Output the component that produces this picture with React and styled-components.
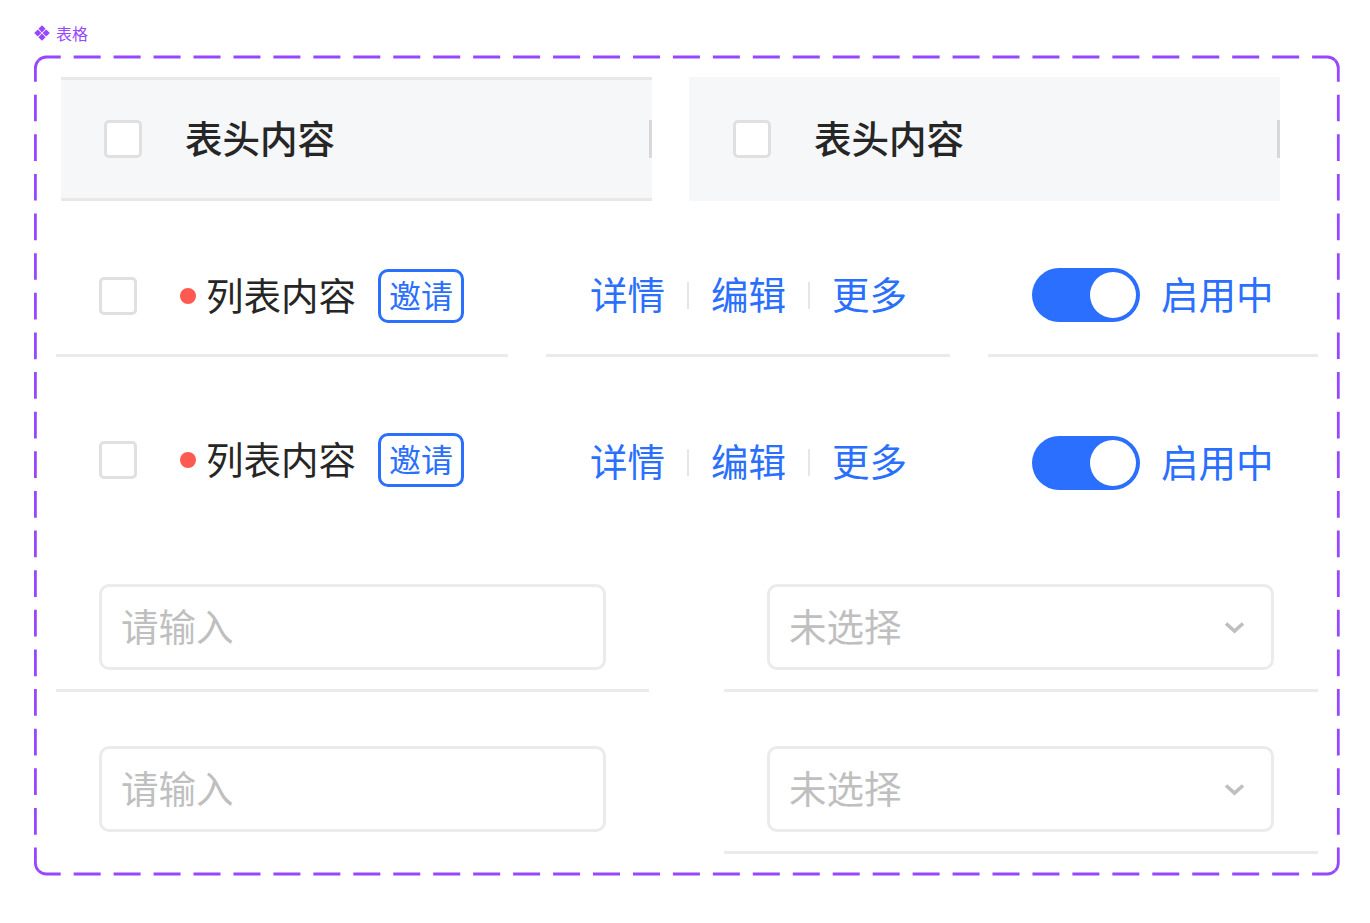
import React from 'react';
import styled, { createGlobalStyle } from 'styled-components';

const GlobalStyle = createGlobalStyle`
  html, body {
    margin: 0;
    padding: 0;
    background: #ffffff;
  }
  * {
    box-sizing: border-box;
  }
  body {
    font-family: "Noto Sans CJK SC", "Noto Sans", sans-serif;
  }
`;

const Page = styled.div`
  width: 1370px;
  height: 923px;
  padding: 23px 0 0 34px;
`;

const FrameLabel = styled.div`
  display: flex;
  align-items: center;
  gap: 6px;
  height: 20px;
  font-size: 16px;
  line-height: 20px;
  color: #9747ff;
`;

const Frame = styled.div`
  position: relative;
  width: 1303px;
  height: 817px;
  margin: 14px 0 0 1px;
  padding: 20px 0 0 21px;
`;

const DashedOutline = styled.svg`
  position: absolute;
  top: 0;
  left: 0;
  overflow: visible;
  pointer-events: none;
`;

const HeaderRow = styled.div`
  display: flex;
  gap: 37px;
  margin-left: 5px;
`;

const HeaderCell = styled.div`
  position: relative;
  display: flex;
  align-items: center;
  width: 591px;
  height: 124px;
  padding-left: ${(p) => p.$inset}px;
  background: #f6f7f9;
  border-top: ${(p) => (p.$lined ? '3px solid #e8e8e8' : 'none')};
  border-bottom: ${(p) => (p.$lined ? '3px solid #e8e8e8' : 'none')};
`;

const HeaderDivider = styled.span`
  position: absolute;
  top: 50%;
  right: 0;
  width: 3px;
  height: 38px;
  margin-top: -19px;
  background: #d8d8d8;
`;

const Checkbox = styled.span`
  flex: none;
  display: block;
  width: ${(p) => p.$size}px;
  height: ${(p) => p.$size}px;
  background: #ffffff;
  border: 3px solid #e0e0e0;
  border-radius: 5px;
`;

const HeaderText = styled.span`
  margin-left: 43px;
  padding-bottom: 5px;
  font-size: 37.5px;
  line-height: 54px;
  font-weight: 500;
  color: #262626;
`;

const ListRow = styled.div`
  display: grid;
  grid-template-columns: 452px 404px 330px;
  column-gap: 38px;
  height: ${(p) => p.$height}px;
`;

const ListCell = styled.div`
  display: flex;
  align-items: flex-start;
  padding-top: ${(p) => p.$top}px;
  padding-left: ${(p) => p.$left}px;
  border-bottom: ${(p) => (p.$lined ? '3px solid #ebebeb' : 'none')};
`;

const ContentLine = styled.div`
  display: flex;
  align-items: center;
  height: 54px;
`;

const StatusDot = styled.span`
  width: 16px;
  height: 16px;
  margin-left: 43px;
  border-radius: 50%;
  background: #ff5a52;
`;

const ListText = styled.span`
  margin-left: 10px;
  padding-bottom: 5px;
  font-size: 37.5px;
  line-height: 54px;
  color: #262626;
`;

const Tag = styled.span`
  display: flex;
  align-items: center;
  justify-content: center;
  width: 86px;
  height: 54px;
  margin-left: 22px;
  padding-bottom: 4px;
  border: 3px solid #2a6fff;
  border-radius: 10px;
  font-size: 32px;
  line-height: 1;
  color: #2a6fff;
`;

const ActionLink = styled.a`
  padding-bottom: 5px;
  font-size: 37.5px;
  line-height: 54px;
  color: #2a6fff;
`;

const ActionDivider = styled.span`
  width: 2px;
  height: 27px;
  margin: 0 22px 0 22px;
  background: #e6e6e6;
`;

const Switch = styled.span`
  position: relative;
  display: block;
  width: 108px;
  height: 54px;
  border-radius: 27px;
  background: #2a6fff;
`;

const SwitchThumb = styled.span`
  position: absolute;
  top: 4px;
  right: 4px;
  width: 46px;
  height: 46px;
  border-radius: 50%;
  background: #ffffff;
`;

const SwitchLabel = styled.span`
  margin-left: 21px;
  padding-bottom: 5px;
  font-size: 37.5px;
  line-height: 54px;
  color: #2a6fff;
`;

const FormRow = styled.div`
  display: grid;
  grid-template-columns: 593px 594px;
  column-gap: 75px;
  padding-top: ${(p) => p.$top}px;
`;

const FormCell = styled.div`
  padding: 0 44px 19px 43px;
  border-bottom: ${(p) => (p.$lined ? '3px solid #ebebeb' : '3px solid transparent')};
`;

const Field = styled.div`
  display: flex;
  align-items: center;
  justify-content: space-between;
  width: 507px;
  height: 86px;
  padding: 0 26px 0 19px;
  border: 3px solid #ebebeb;
  border-radius: 10px;
  font-size: 37.5px;
  color: #bfbfbf;
`;

const FieldText = styled.span`
  padding-bottom: 5px;
`;

const DiamondIcon = () => (
  <svg width="16" height="16" viewBox="0 0 16 16" fill="#9747ff">
    <path d="M8 .2 11.6 3.8 8 7.4 4.4 3.8Z" />
    <path d="M3.8 4.4 7.4 8 3.8 11.6 .2 8Z" />
    <path d="M12.2 4.4 15.8 8 12.2 11.6 8.6 8Z" />
    <path d="M8 8.6 11.6 12.2 8 15.8 4.4 12.2Z" />
  </svg>
);

const ChevronIcon = () => (
  <svg width="21" height="14" viewBox="0 0 21 14" fill="none">
    <path d="M2 3.5 10.5 11 19 3.5" stroke="#bfbfbf" strokeWidth="3.6" />
  </svg>
);

// each side runs from the middle of one corner arc to the next, so a dash sits on every corner
const outlineSides = [
  { d: 'M3.62 3.22A11 11 0 0 1 11.4 0H1292.3A11 11 0 0 1 1300.08 3.22', dash: '27 12.95', offset: 4.1 },
  { d: 'M1300.08 3.22A11 11 0 0 1 1303.3 11V806A11 11 0 0 1 1300.08 813.78', dash: '26.7 12.93', offset: 4.4 },
  { d: 'M3.62 813.78A11 11 0 0 0 11.4 817H1292.3A11 11 0 0 0 1300.08 813.78', dash: '27 12.95', offset: 4.1 },
  { d: 'M3.62 3.22A11 11 0 0 0 .4 11V806A11 11 0 0 0 3.62 813.78', dash: '26.7 12.93', offset: 4.4 },
];

const Outline = () => (
  <DashedOutline width="1303" height="817" fill="none" stroke="#9747ff" strokeWidth="2.8">
    {outlineSides.map((side) => (
      <path key={side.d} d={side.d} strokeDasharray={side.dash} strokeDashoffset={side.offset} />
    ))}
  </DashedOutline>
);

const CheckedSwitch = () => (
  <Switch>
    <SwitchThumb />
  </Switch>
);

const Actions = () => (
  <ContentLine>
    <ActionLink>详情</ActionLink>
    <ActionDivider />
    <ActionLink>编辑</ActionLink>
    <ActionDivider />
    <ActionLink>更多</ActionLink>
  </ContentLine>
);

const ListItem = ({ height, lined, tops }) => (
  <ListRow $height={height}>
    <ListCell $lined={lined} $left={43} $top={tops[0]}>
      <ContentLine>
        <Checkbox $size={38} />
        <StatusDot />
        <ListText>列表内容</ListText>
        <Tag>邀请</Tag>
      </ContentLine>
    </ListCell>
    <ListCell $lined={lined} $left={44} $top={tops[1]}>
      <Actions />
    </ListCell>
    <ListCell $lined={lined} $left={44} $top={tops[2]}>
      <ContentLine>
        <CheckedSwitch />
        <SwitchLabel>启用中</SwitchLabel>
      </ContentLine>
    </ListCell>
  </ListRow>
);

const FormItem = ({ top, leftLined }) => (
  <FormRow $top={top}>
    <FormCell $lined={leftLined}>
      <Field>
        <FieldText>请输入</FieldText>
      </Field>
    </FormCell>
    <FormCell $lined>
      <Field>
        <FieldText>未选择</FieldText>
        <ChevronIcon />
      </Field>
    </FormCell>
  </FormRow>
);

const App = () => (
  <Page>
    <GlobalStyle />
    <FrameLabel>
      <DiamondIcon />
      表格
    </FrameLabel>
    <Frame>
      <Outline />
      <HeaderRow>
        <HeaderCell $lined $inset={43}>
          <Checkbox $size={38} />
          <HeaderText>表头内容</HeaderText>
          <HeaderDivider />
        </HeaderCell>
        <HeaderCell $inset={44}>
          <Checkbox $size={38} />
          <HeaderText>表头内容</HeaderText>
          <HeaderDivider />
        </HeaderCell>
      </HeaderRow>
      <ListItem height={156} lined tops={[68, 67, 67]} />
      <ListItem height={183} tops={[76, 78, 79]} />
      <FormItem top={44} leftLined />
      <FormItem top={54} />
    </Frame>
  </Page>
);

export default App;
